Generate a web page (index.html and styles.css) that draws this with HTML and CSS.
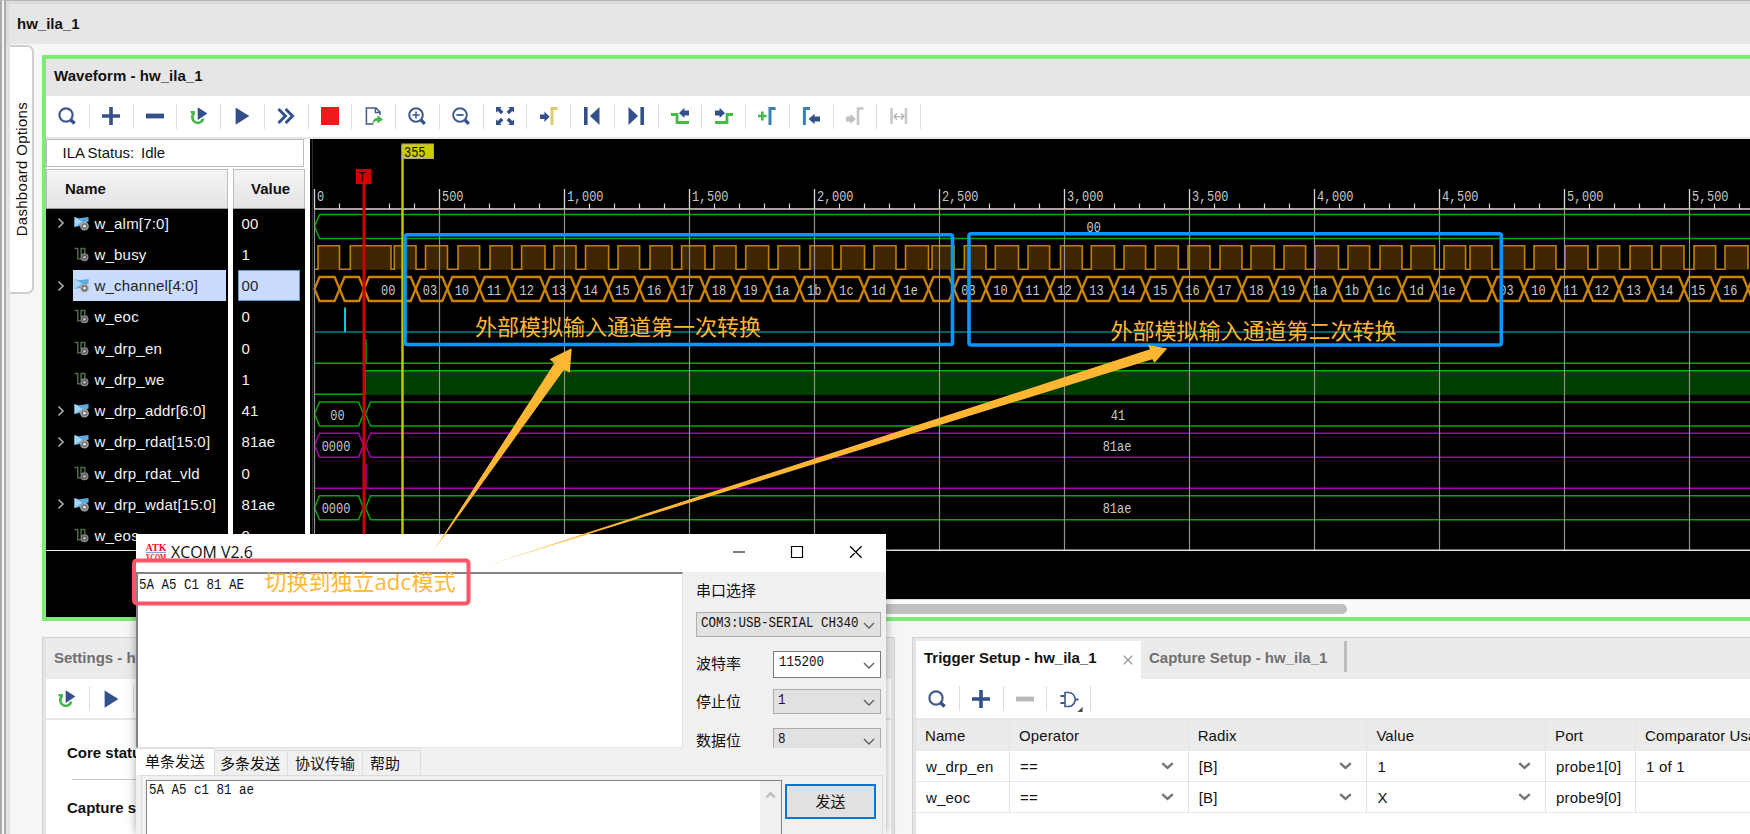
FILE: index.html
```html
<!DOCTYPE html>
<html lang="zh">
<head>
<meta charset="utf-8">
<title>hw_ila_1</title>
<link rel="stylesheet" href="styles.css">
</head>
<body>
<svg class="defs" aria-hidden="true">
  <symbol id="i-search" viewBox="0 0 18 18"><circle cx="8" cy="8" r="6.6" fill="none" stroke="#42598c" stroke-width="2.2"/><path d="M12.6 12.8L16.6 16.6" stroke="#34508c" stroke-width="3.4"/></symbol>
  <symbol id="i-plus" viewBox="0 0 18 18"><path d="M0 9H18M9 0V18" stroke="#34508a" stroke-width="3.6"/></symbol>
  <symbol id="i-minus" viewBox="0 0 18 18"><path d="M0 9H18" stroke="currentColor" stroke-width="4.8"/></symbol>
  <symbol id="i-rerun" viewBox="0 0 18 18"><path d="M.6 5.2H5M4.4 6A5.5 5.5 0 1 0 13.2 11.4" fill="none" stroke="#45b649" stroke-width="2.6"/><path d="M7.7 .2L17.4 6.6L7.7 13Z" fill="#34508a"/></symbol>
  <symbol id="i-play" viewBox="0 0 18 18"><path d="M2.6 .4L16.4 9L2.6 17.8Z" fill="#34508a"/></symbol>
  <symbol id="i-ff" viewBox="0 0 18 18"><path d="M1.5 2L8.4 9L1.5 16M8.6 2L15.5 9L8.6 16" fill="none" stroke="#34508a" stroke-width="3"/></symbol>
  <symbol id="i-stop" viewBox="0 0 18 18"><rect width="18" height="18" fill="#ed1b1b"/></symbol>
  <symbol id="i-export" viewBox="0 0 18 18"><path d="M8.5 17H1.4V1H11L15 5V8M10.4 1V5.6H15" fill="none" stroke="#42598c" stroke-width="1.5"/><path d="M7.5 17.6C7.5 12.6 9.6 11 12.4 11V8L18 12.4L12.4 16.6V13.8C10.2 13.8 8.8 15 7.5 17.6Z" fill="#45b649"/></symbol>
  <symbol id="i-zin" viewBox="0 0 18 18"><circle cx="8" cy="8" r="6.8" fill="none" stroke="#42598c" stroke-width="2"/><path d="M4.4 8H11.6M8 4.4V11.6" stroke="#42598c" stroke-width="1.6"/><path d="M13 13L16.8 16.8" stroke="#34508c" stroke-width="3.2"/></symbol>
  <symbol id="i-zout" viewBox="0 0 18 18"><circle cx="8" cy="8" r="6.8" fill="none" stroke="#42598c" stroke-width="2"/><path d="M4.4 8H11.6" stroke="#42598c" stroke-width="1.8"/><path d="M13 13L16.8 16.8" stroke="#34508c" stroke-width="3.2"/></symbol>
  <symbol id="i-fit" viewBox="0 0 18 18"><path d="M0 0H5.6L4.2 1.6L7.4 4.8L5 7.2L1.7 4L0 5.6ZM18 0V5.6L16.3 4L13 7.2L10.6 4.8L13.8 1.6L12.4 0ZM0 18V12.4L1.7 14L5 10.8L7.4 13.2L4.2 16.4L5.6 18ZM18 18H12.4L13.8 16.4L10.6 13.2L13 10.8L16.3 14L18 12.4Z" fill="#34508a"/></symbol>
  <symbol id="i-tocur" viewBox="0 0 18 18"><path d="M0 7.4H4.4V4.6L9.6 9.8L4.4 15V12H0Z" fill="var(--a)"/><path d="M12 18V1.5H17.6" fill="none" stroke="var(--e)" stroke-width="3"/></symbol>
  <symbol id="i-first" viewBox="0 0 18 18"><path d="M1 0H4.6V18H1ZM16.5 0V18L7 9Z" fill="#34508a"/></symbol>
  <symbol id="i-last" viewBox="0 0 18 18"><path d="M17 0H13.4V18H17ZM1.5 0V18L11 9Z" fill="#34508a"/></symbol>
  <symbol id="i-prevtr" viewBox="0 0 18 18"><path d="M0 7.5H6V15.5H18" fill="none" stroke="#45bb45" stroke-width="2.8"/><path d="M18 3.4H13.4V.8L8 6L13.4 11V8.4H18Z" fill="#34508a"/></symbol>
  <symbol id="i-nexttr" viewBox="0 0 18 18"><path d="M0 15.5H12V7.5H18" fill="none" stroke="#45bb45" stroke-width="2.8"/><path d="M0 3.4H4.6V.8L10 6L4.6 11V8.4H0Z" fill="#34508a"/></symbol>
  <symbol id="i-addm" viewBox="0 0 18 18"><path d="M0 9H8.6M4.3 4.6V13.4" stroke="#45b649" stroke-width="2.6"/><path d="M12 18V1.5H17.6" fill="none" stroke="#3b80b2" stroke-width="3"/></symbol>
  <symbol id="i-prevm" viewBox="0 0 18 18"><path d="M2.4 18V1.5H8" fill="none" stroke="#3b80b2" stroke-width="3"/><path d="M18 9.4H12.6V6.8L6.6 12L12.6 17.2V14.6H18Z" fill="#34508a"/></symbol>
  <symbol id="i-nextm" viewBox="0 0 18 18"><path d="M0 9.4H4.4V7L9.8 12L4.4 17V14.6H0Z" fill="#c0c0c0"/><path d="M12 18V1.5H17.6" fill="none" stroke="#c4c4c4" stroke-width="2.6"/></symbol>
  <symbol id="i-span" viewBox="0 0 18 18"><path d="M1.5 1V17M16 1V17" stroke="#c8c8c8" stroke-width="2.6"/><path d="M4 9.6H14M7 6.6L4 9.6L7 12.6M11 6.6L14 9.6L11 12.6" fill="none" stroke="#b4b4b4" stroke-width="1.4"/></symbol>
  <symbol id="i-gate" viewBox="0 0 24 24"><path d="M6 4.5H9.5C14 4.5 15.8 8.5 16.4 11.5C15.8 14.5 14 18.5 9.5 18.5H6Z" fill="none" stroke="#42598c" stroke-width="1.6"/><path d="M1.4 8H6M1.4 15H6M16 11.5H19.5" stroke="#42598c" stroke-width="2"/><path d="M17.6 25V24.8L23.6 19V25Z" fill="#4a4a4a"/></symbol>
  <symbol id="i-bus" viewBox="0 0 16 16"><path d="M.5 1L5 2.4L15.5 1V6L9 7V10L5 11L.5 11.6Z" fill="#5aa9e0"/><path d="M.5 1L9 6L.5 11.6Z" fill="#a9d6f4"/><circle cx="11.2" cy="10.8" r="3.9" fill="#707070" stroke="#a8a8a8" stroke-width="1.4"/><circle cx="11.2" cy="10.8" r="1.5" fill="#e8e8e8"/></symbol>
  <symbol id="i-wire" viewBox="0 0 16 16"><path d="M.5 1.5H4V12.5H8M7.5 9V1.5H11.5V7" fill="none" stroke="#4d6b44" stroke-width="1.6"/><circle cx="11.2" cy="11" r="3.6" fill="#5a5a5a" stroke="#8c8c8c" stroke-width="1.3"/><circle cx="11.2" cy="11" r="1.4" fill="#b8b8b8"/></symbol>
  <symbol id="i-exp" viewBox="0 0 8 12"><path d="M1.5 1.5L6 6L1.5 10.5" fill="none" stroke="#a8a8a8" stroke-width="1.7"/></symbol>
  <symbol id="i-down" viewBox="0 0 13 8"><path d="M1.2 1.2L6.5 6L11.8 1.2" fill="none" stroke="#757575" stroke-width="2.4"/></symbol>
  <symbol id="i-combo" viewBox="0 0 12 8"><path d="M1 1L6 6L11 1" fill="none" stroke="#5f5f5f" stroke-width="1.4"/></symbol>
</svg>

<main class="app">
  <header class="app-title">hw_ila_1</header>
  <div class="workspace">
    <aside class="side"><div class="side-tab"><span>Dashboard Options</span></div></aside>
    <div class="content">
      <section class="wave">
        <h2 class="wave-title">Waveform - hw_ila_1</h2>
        <div class="toolbar">
          <span><svg><use href="#i-search"/></svg></span>
          <span><svg><use href="#i-plus"/></svg></span>
          <span><svg><use href="#i-minus"/></svg></span>
          <span><svg><use href="#i-rerun"/></svg></span>
          <span><svg><use href="#i-play"/></svg></span>
          <span><svg><use href="#i-ff"/></svg></span>
          <span><svg><use href="#i-stop"/></svg></span>
          <span><svg><use href="#i-export"/></svg></span>
          <span><svg><use href="#i-zin"/></svg></span>
          <span><svg><use href="#i-zout"/></svg></span>
          <span><svg><use href="#i-fit"/></svg></span>
          <span><svg><use href="#i-tocur"/></svg></span>
          <span><svg><use href="#i-first"/></svg></span>
          <span><svg><use href="#i-last"/></svg></span>
          <span><svg><use href="#i-prevtr"/></svg></span>
          <span><svg><use href="#i-nexttr"/></svg></span>
          <span><svg><use href="#i-addm"/></svg></span>
          <span><svg><use href="#i-prevm"/></svg></span>
          <span><svg><use href="#i-nextm"/></svg></span>
          <span><svg><use href="#i-span"/></svg></span>
        </div>
        <div class="wave-body">
          <div class="signals">
            <div class="status">ILA Status:&nbsp; Idle</div>
            <div class="cols">
              <div class="col names">
                <div class="col-head">Name</div>
                <ul>
                  <li><svg class="exp"><use href="#i-exp"/></svg><span><svg><use href="#i-bus"/></svg>w_alm[7:0]</span></li>
                  <li><i class="exp"></i><span><svg><use href="#i-wire"/></svg>w_busy</span></li>
                  <li><svg class="exp"><use href="#i-exp"/></svg><span class="sel"><svg><use href="#i-bus"/></svg>w_channel[4:0]</span></li>
                  <li><i class="exp"></i><span><svg><use href="#i-wire"/></svg>w_eoc</span></li>
                  <li><i class="exp"></i><span><svg><use href="#i-wire"/></svg>w_drp_en</span></li>
                  <li><i class="exp"></i><span><svg><use href="#i-wire"/></svg>w_drp_we</span></li>
                  <li><svg class="exp"><use href="#i-exp"/></svg><span><svg><use href="#i-bus"/></svg>w_drp_addr[6:0]</span></li>
                  <li><svg class="exp"><use href="#i-exp"/></svg><span><svg><use href="#i-bus"/></svg>w_drp_rdat[15:0]</span></li>
                  <li><i class="exp"></i><span><svg><use href="#i-wire"/></svg>w_drp_rdat_vld</span></li>
                  <li><svg class="exp"><use href="#i-exp"/></svg><span><svg><use href="#i-bus"/></svg>w_drp_wdat[15:0]</span></li>
                  <li><i class="exp"></i><span><svg><use href="#i-wire"/></svg>w_eos</span></li>
                </ul>
              </div>
              <div class="col values">
                <div class="col-head">Value</div>
                <ul>
                  <li>00</li><li>1</li><li class="sel">00</li><li>0</li><li>0</li><li>1</li><li>41</li><li>81ae</li><li>0</li><li>81ae</li><li>0</li>
                </ul>
              </div>
            </div>
          </div>
          <div class="plot">
            <svg id="plot" width="1440" height="460" viewBox="310 139 1440 460"></svg>
            <div class="hscroll"><div class="thumb"></div></div>
          </div>
        </div>
      </section>

      <div class="bottom">
        <section class="panel settings">
          <div class="tabs"><div class="tab dim">Settings - hw_ila_1</div></div>
          <div class="toolbar">
            <span><svg><use href="#i-rerun"/></svg></span>
            <span><svg><use href="#i-play"/></svg></span>
          </div>
          <div class="core"><p>Core status</p><hr><p>Capture status</p></div>
        </section>
        <section class="panel trigger">
          <div class="tabs">
            <div class="tab active">Trigger Setup - hw_ila_1
              <svg class="close" viewBox="0 0 10 10"><path d="M.8 .8L9.2 9.2M9.2 .8L.8 9.2" stroke="#a0a0a0" stroke-width="1.5"/></svg>
            </div>
            <div class="tab dim">Capture Setup - hw_ila_1</div>
            <div class="tab-end"></div>
          </div>
          <div class="toolbar">
            <span><svg><use href="#i-search"/></svg></span>
            <span><svg><use href="#i-plus"/></svg></span>
            <span class="off"><svg><use href="#i-minus"/></svg></span>
            <span class="gate"><svg><use href="#i-gate"/></svg></span>
          </div>
          <div class="table">
            <div class="th">Name</div><div class="th">Operator</div><div class="th">Radix</div><div class="th">Value</div><div class="th">Port</div><div class="th">Comparator Usage</div>
            <div>w_drp_en</div><div>==<svg><use href="#i-down"/></svg></div><div>[B]<svg><use href="#i-down"/></svg></div><div>1<svg><use href="#i-down"/></svg></div><div>probe1[0]</div><div>1 of 1</div>
            <div>w_eoc</div><div>==<svg><use href="#i-down"/></svg></div><div>[B]<svg><use href="#i-down"/></svg></div><div>X<svg><use href="#i-down"/></svg></div><div>probe9[0]</div><div></div>
          </div>
        </section>
      </div>
    </div>
  </div>
</main>

<section class="xcom">
  <header>
    <div class="logo"><b>ATK</b><i></i><b>XCOM</b></div>
    <span class="xt">XCOM V2.6</span>
    <svg class="winbtns" width="130" height="14" viewBox="0 0 130 14"><path d="M0 7H12M58.5 1.5H69.5V12.5H58.5ZM117 1.3L128.6 12.8M128.6 1.3L117 12.8" fill="none" stroke="#000" stroke-width="1.2"/></svg>
  </header>
  <div class="x-main">
    <div class="rx"><span class="mono">5A A5 C1 81 AE</span></div>
    <div class="opts">
      <div class="lab">串口选择</div>
      <div class="combo wide"><span class="mono clip">COM3:USB-SERIAL CH340</span><svg><use href="#i-combo"/></svg></div>
      <div class="row r1"><span>波特率</span><div class="combo edit"><span class="mono">115200</span><svg><use href="#i-combo"/></svg></div></div>
      <div class="row"><span>停止位</span><div class="combo"><span class="mono">1</span><svg><use href="#i-combo"/></svg></div></div>
      <div class="row r3"><span>数据位</span><div class="combo"><span class="mono">8</span><svg><use href="#i-combo"/></svg></div></div>
    </div>
  </div>
  <div class="x-tabs"><span class="on">单条发送</span><span>多条发送</span><span>协议传输</span><span>帮助</span></div>
  <div class="x-page">
    <div class="tx"><span class="mono">5A A5 c1 81 ae</span><div class="vs"><svg viewBox="0 0 12 8"><path d="M1.5 6.5L6 2L10.5 6.5" fill="none" stroke="#bdbdbd" stroke-width="2.6"/></svg></div></div>
    <div class="send">发送</div>
  </div>
</section>

<svg class="notes" width="1750" height="834" viewBox="0 0 1750 834">
  <defs>
    <linearGradient id="fade1" gradientUnits="userSpaceOnUse" x1="431" y1="555" x2="445" y2="534"><stop offset="0" stop-color="#ffb733" stop-opacity=".3"/><stop offset="1" stop-color="#ffb733"/></linearGradient>
    <linearGradient id="fade2" gradientUnits="userSpaceOnUse" x1="476" y1="569" x2="590" y2="532"><stop offset="0" stop-color="#ffb733" stop-opacity=".3"/><stop offset="1" stop-color="#ffb733"/></linearGradient>
  </defs>
  <rect x="405" y="234.8" width="547.5" height="109.7" rx="2"/>
  <rect x="969" y="233.8" width="532.3" height="111.2" rx="2"/>
  <rect class="pink" x="134" y="560.4" width="334.5" height="43" rx="3"/>
  <path fill="url(#fade1)" d="M431 554.5L554.4 363.2L549.6 359.3L571.7 348.3L569.8 372.8L564.2 369.5Z"/>
  <path fill="url(#fade2)" d="M476 569L1150 349.2L1148 345L1167.2 348.4L1154.4 363L1152.3 359.2Z"/>
  <text x="475" y="334.8" textLength="286">外部模拟输入通道第一次转换</text>
  <text x="1110.5" y="338.8" textLength="286">外部模拟输入通道第二次转换</text>
  <text x="264.5" y="589.5">切换到独立</text>
  <text x="374.5" y="589.5" class="latin" textLength="36.5" lengthAdjust="spacingAndGlyphs">adc</text>
  <text x="411.5" y="589.5">模式</text>
</svg>
<script src="wave.js"></script>
</body>
</html>
```
FILE: styles.css
```css
* { box-sizing: border-box; margin: 0; padding: 0; }
body { width: 1750px; height: 834px; overflow: hidden; position: relative; background: #f6f6f6; font: 15px "Liberation Sans", Arial, sans-serif; color: #111; }
.defs { position: absolute; width: 0; height: 0; }
ul { list-style: none; }
svg { display: block; flex: none; }

.app { width: 1752px; height: 836px; border-left: 6px double #ababab; border-top: 1px solid #b4b4b4; display: flex; flex-direction: column; }
.app-title { height: 43px; flex: none; background: #e6e6e6; border-top: 3px solid #dcdcdc; border-left: 3px solid #dcdcdc; padding-left: 8px; line-height: 39px; font-weight: bold; }
.workspace { flex: 1; display: flex; background: #f6f6f6; border-left: 4px solid #e2e2e2; }
.side { width: 32px; flex: none; padding-top: 1px; }
.side-tab { width: 24px; height: 249px; background: #fff; border: 2px solid #cfcfcf; border-left: 0; border-radius: 0 7px 7px 0; display: flex; align-items: center; justify-content: center; }
.side-tab span { writing-mode: vertical-rl; transform: rotate(180deg); white-space: nowrap; letter-spacing: .3px; }
.content { flex: 1; min-width: 0; padding-top: 11px; }

.wave { height: 566px; border: 4px solid #7eeb79; border-right: 0; background: #fff; overflow: hidden; }
.wave-title { height: 37px; background: #e6e6e6; font-size: 15px; line-height: 34px; padding-left: 8px; letter-spacing: .04px; }
.toolbar { display: flex; align-items: center; background: #fff; border-bottom: 2px solid #e6e6e6; }
.toolbar span { width: 43.75px; height: 25px; border-right: 1.5px solid #dcdcdc; display: flex; align-items: center; justify-content: center; color: #34508a; }
.toolbar svg { width: 18px; height: 18px; --a: #34508a; --e: #e0cb68; }
.toolbar .off { color: #b9b9b9; }
.wave .toolbar { height: 43px; padding-bottom: 1px; }
.wave-body { display: flex; height: 478px; }
.signals { width: 264px; flex: none; }
.status { width: 258px; height: 28px; border: 1.5px solid #bdbdbd; line-height: 26px; padding-left: 15.5px; background: #fff; word-spacing: -.8px; }
.cols { display: flex; gap: 5px; margin-top: 2px; }
.col { height: 449px; background: #000; color: #f2f2f2; }
.names { width: 182px; }
.values { width: 72px; }
.col-head { height: 40px; background: linear-gradient(#f4f4f4, #e4e4e6); border: 1.5px solid #bdbdbd; border-bottom-color: #9a9a9a; color: #111; font-weight: bold; line-height: 37px; padding-left: 18px; }
.values .col-head { padding-left: 17px; }
.col ul { height: 342px; border-bottom: 1.5px solid #eee; overflow: hidden; }
.col li { height: 31.25px; display: flex; align-items: center; position: relative; top: -1.5px; letter-spacing: .05px; }
.names .exp { width: 8px; height: 12px; margin: 0 13px 0 11px; }
.names li span { flex: 1; height: 31px; margin-right: 2px; display: flex; align-items: center; margin-left: -5px; padding-left: 1px; gap: 5.5px; letter-spacing: .2px; }
.names li span svg { width: 15px; height: 15px; }
.names .sel { background: #c9dcff; color: #222; }
.values li { padding-left: 8.5px; }
.values li.sel { background: #c9dcff; border: 1.5px solid #5b9bd5; margin: 0 5px; padding-left: 2.5px; color: #222; }
.plot { flex: 1; background: #fafafa; overflow: hidden; }
#plot { background: #000; }
#plot text { font: 13px "Liberation Mono", monospace; fill: #c8c8c8; }
.hscroll { height: 18px; border-top: 1px solid #ddd; padding-top: 4px; }
.thumb { width: 1037px; height: 10px; border-radius: 0 5px 5px 0; background: #c0c0c0; }

.bottom { display: flex; gap: 17px; margin-top: 16px; }
.panel { border: 1.5px solid #d2d2d2; height: 210px; background: #fff; flex: none; box-shadow: inset 3px 0 0 #e4e4e4, inset -3px 0 0 #e4e4e4; padding: 0 3px; }
.settings { width: 853px; }
.trigger { width: 850px; }
.tabs { display: flex; height: 41px; background: #ebebeb; padding-top: 3px; }
.tab { font-weight: bold; line-height: 34px; padding-left: 8px; white-space: nowrap; }
.dim { color: #6f6f72; }
.tab.active { width: 225px; background: #fff; display: flex; align-items: center; color: #111; height: 38px; padding-bottom: 4px; }
.close { width: 10px; height: 10px; margin: 3px 0 0 auto; transform: translateX(-8px); }
.tab-end { width: 3px; height: 31px; background: #bdbdbd; margin-left: 17px; }
.panel .toolbar { height: 41px; border-bottom-width: 2.5px; }
.gate svg { width: 24px; height: 24px; overflow: visible; transform: translate(2px, 1px); }
.core { padding: 24.5px 0 0 21px; font-weight: bold; }
.core p { line-height: 16px; }
.core hr { border: 0; border-top: 1.5px solid #c8c8c8; margin: 18px 20px 20px 5px; }
.table { display: grid; grid-template-columns: 94px 178.7px 178.7px 178.7px 90px 120px; grid-template-rows: 31px 31px 31px; width: 850px; }
.table div { border-right: 1.5px solid #e2e2e2; border-bottom: 1.5px solid #e8e8e8; padding: 0 14px 0 10px; display: flex; align-items: center; justify-content: space-between; white-space: nowrap; overflow: hidden; letter-spacing: .2px; }
.table .th { background: #ebebeb; padding-left: 9px; border-bottom-color: #ebebeb; letter-spacing: .1px; }
.table svg { width: 13px; height: 8px; }

.mono { font: 12.5px/15px "Liberation Mono", monospace; transform: scaleY(1.18); display: inline-block; white-space: pre; color: #111; }
.xcom { position: absolute; left: 136px; top: 534px; width: 750px; height: 300px; background: #f0f0f0; box-shadow: 0 0 9px rgba(0,0,0,.35); font: 15px "Noto Sans CJK SC", sans-serif; clip-path: inset(0 -12px 0 -12px); }
.xcom header { height: 38px; background: #fff; display: flex; align-items: center; padding: 0 23px 2px 10px; }
.logo { width: 20px; height: 18px; margin-top: 2px; display: flex; flex-direction: column; align-items: center; color: #f0101c; font: bold 10px/8px "Liberation Serif", serif; overflow: hidden; }
.logo i { width: 20px; height: 1px; background: #8a9af0; margin: 0 0 1px; }
.logo b + i + b { transform: scaleX(.66); }
.xt { font: 15.9px "Open Sans", sans-serif; color: #111; margin-left: 5px; flex: 1; }
.x-main { display: flex; height: 176px; overflow: hidden; }
.rx { width: 547px; flex: none; background: #fff; border-top: 2px solid #828282; border-left: 2px solid #828282; border-right: 1.5px solid #e3e3e3; border-bottom: 1.5px solid #e3e3e3; padding: 5px 0 0 1px; display: flex; align-items: flex-start; }
.opts { flex: 1; padding: 6px 5px 0 13px; }
.lab { line-height: 24px; }
.combo { width: 108px; height: 25px; border: 1.5px solid #adadad; background: #e1e1e1; display: flex; align-items: center; justify-content: space-between; padding: 0 5px 0 4px; }
.combo svg { width: 12px; height: 8px; margin-top: 2px; }
.combo.wide { width: 185px; margin-top: 10px; }
.clip { width: 157px; overflow: hidden; }
.combo.edit { height: 27px; background: #fff; border-color: #7a7a7a; padding-left: 5px; }
.combo.edit .mono { margin-top: -3px; }
.row { display: flex; justify-content: space-between; align-items: center; width: 185px; margin-top: 11px; }
.row > span { line-height: 22px; margin-top: -1px; }
.r1 { margin-top: 14px; }
.r1 > span { margin-top: -4px; }
.r3 { margin-top: 14px; }
.x-tabs { display: flex; align-items: flex-end; height: 27px; line-height: 23px; }
.x-tabs span { height: 25px; padding: 0 7px; border: 1.5px solid #dcdcdc; border-bottom: 0; border-left: 0; }
.x-tabs .on { background: #fff; height: 27px; width: 79px; padding-left: 9px; }
.x-tabs span:nth-child(2) { width: 73px; padding-left: 5px; }
.x-tabs span:nth-child(3) { width: 75px; }
.x-tabs span:nth-child(4) { width: 58px; }
.x-page { display: flex; gap: 3px; border: 1.5px solid #dcdcdc; margin: 0 3px 0 5px; padding: 4px 0 0 4px; height: 62px; }
.tx { width: 636px; background: #fff; border: 1.5px solid #828282; border-bottom: 0; display: flex; justify-content: space-between; padding-left: 2px; }
.tx .mono { margin-top: 3px; height: 15px; }
.vs { width: 21px; background: #f0f0f0; padding: 10px 5px; }
.vs svg { width: 11px; height: 8px; }
.send { width: 91px; height: 35px; margin-top: 4px; border: 2.5px solid #0078d7; background: #e1e1e1; text-align: center; line-height: 29px; }

.notes { position: absolute; left: 0; top: 0; }
.notes rect { fill: none; stroke: #0a95ff; stroke-width: 3.6; }
.notes .pink { stroke: #ff5466; stroke-width: 4; }
.notes text { font: 22px "Noto Sans CJK SC", sans-serif; fill: #ffb733; }
.notes .latin { font: 21.5px "Open Sans", sans-serif; }
```
FILE: wave.js
```javascript
const svg = document.getElementById('plot');
const X0 = 314.5, END = 1752, TOP = 214.5, PITCH = 31.25, H = 24;
const parts = [];
const path = (d, stroke, width = 1.5, fill = 'none') =>
  parts.push(`<path d="${d}" stroke="${stroke}" stroke-width="${width}" fill="${fill}"/>`);
const label = (x, y, s, anchor = 'middle', color = '#c8c8c8') =>
  parts.push(`<text transform="translate(${x} ${y}) scale(.92 1.12)" text-anchor="${anchor}" style="fill:${color}">${s}</text>`);
const rowTop = k => TOP + k * PITCH;

// Sampled busy pulses: [rise, fall]
const busy = [[318,339.5],[350.3,391],[394.3,416],[425.5,447.5],[458,479.6],[490,512],[521.6,545],[554,576],[585.5,608.6],[618,639.6],[650,672],[681.6,705],[714,736],[745.7,768.6],[778,799.6],[810,832.6],[841,864.5],[874,896],[905.5,928.5],[932,954],[964.3,986],[995.3,1018.5],[1028,1049.6],[1060.5,1082.3],[1091.3,1114.5],[1124,1145.6],[1155.3,1178.3],[1188,1210],[1220,1242],[1251,1274.3],[1284,1305.6],[1315,1338.5],[1348,1369.6],[1380,1402],[1411,1434.6],[1444,1465.6],[1470,1492],[1502,1524.6],[1534,1556],[1565,1588],[1597.6,1619.6],[1630,1652],[1661,1684],[1694,1715.6],[1725,1748]];
const edges = [314.5,339.6,364,415.7,447.3,479.6,511.7,545,576,608.6,639.6,672,705,736,768,799.6,832,864,896,928.5,954,986,1018,1050,1082,1114,1145.6,1178,1210,1242,1274,1305,1338,1369,1402,1434.6,1465.6,1492,1524,1556,1588,1619,1651.6,1684,1715.6,1748,1780];
const seq = ['10','11','12','13','14','15','16','17','18','19','1a','1b','1c','1d','1e'];
const channel = ['','','00','03',...seq,'','03',...seq,'','03',...seq];

// Bus with pointed cell ends
const cell = (a, b, k, color, width = 1.5) => {
  const t = rowTop(k), m = t + H / 2, z = t + H;
  path(`M${a} ${m}L${a + 5} ${t}H${b - 5}L${b} ${m}L${b - 5} ${z}H${a + 5}Z`, color, width);
};

const GREEN = '#00aa00', PURPLE = '#a800a8';
cell(X0, 1800, 0, GREEN);

const b0 = rowTop(1), b1 = b0 + H - .5;
let d = `M${X0} ${b1}`;
for (const [r, f] of busy) {
  parts.push(`<rect x="${r}" y="${b0}" width="${f - r}" height="${H}" fill="#3d2600"/>`);
  d += `H${r}V${b0}H${f}V${b1}`;
}
path(d, '#c08000', 1.6);

for (let i = 0; i < edges.length - 1; i++) cell(edges[i], edges[i + 1], 2, '#cc8400', 2.3);

path(`M${X0} 332H${END}`, '#008484', 1.6);
path('M345 307.5V332', '#00cccc', 2);
path(`M${X0} 363.2H${END}M366 339V363`, GREEN);
parts.push('<rect x="365" y="370.5" width="1390" height="24.5" fill="#003d00"/>');
path(`M${X0} 394.3H365V370.7H${END}`, '#00b000');
for (const [k, c] of [[6, GREEN], [7, PURPLE], [9, GREEN]]) {
  cell(X0, 363.5, k, c);
  cell(365.5, 1800, k, c);
}
path(`M${X0} 488.2H${END}M366 464V488`, PURPLE);

// Time axis
path(`M${X0} 209H${END}`, '#d8d8d8');
for (let t = 0; X0 + t / 4 < END; t += 100) {
  const x = X0 + t / 4;
  if (t % 500) path(`M${x} 203.5V209`, '#d8d8d8', 1.2);
  else {
    path(`M${x} 189V550`, '#909090', 1.2);
    path(`M${x} 189V209`, '#d8d8d8', 1.2);
    const s = t < 1000 ? [String(t)] : [Math.floor(t / 1000) + ',', String(t % 1000).padStart(3, '0')];
    label(x + 2.5, 201, s[0], 'start');
    if (s[1]) label(x + 17.5, 201, s[1], 'start');
  }
}
channel.forEach((s, i) => {
  if (s && i < edges.length - 2) label((edges[i] + edges[i + 1]) / 2 - 1.6, 295, s);
});
label(1093.7, 232, '00');
label(337.5, 419.5, '00');
label(336, 450.7, '0000');
label(336, 513.2, '0000');
label(1118, 419.5, '41');
label(1117, 450.7, '81ae');
label(1117, 513.2, '81ae');
path(`M310 550.3H${END}`, '#ddd');
path('M312.5 139V598', '#2c2c2c', 1);

// Trigger mark and cursor
path('M364 169V550', '#d00000', 3);
parts.push('<rect x="356" y="169" width="15.5" height="15" fill="#d00000"/>');
label(362, 182, 'T', 'middle', '#200');
path('M402.5 145V550', '#c8c800', 2.4);
parts.push('<rect x="402" y="144" width="31.5" height="14.5" fill="#cccc00" stroke="#aaaa88"/>');
label(404, 157, '355', 'start', '#111');
svg.innerHTML = parts.join('');
```
